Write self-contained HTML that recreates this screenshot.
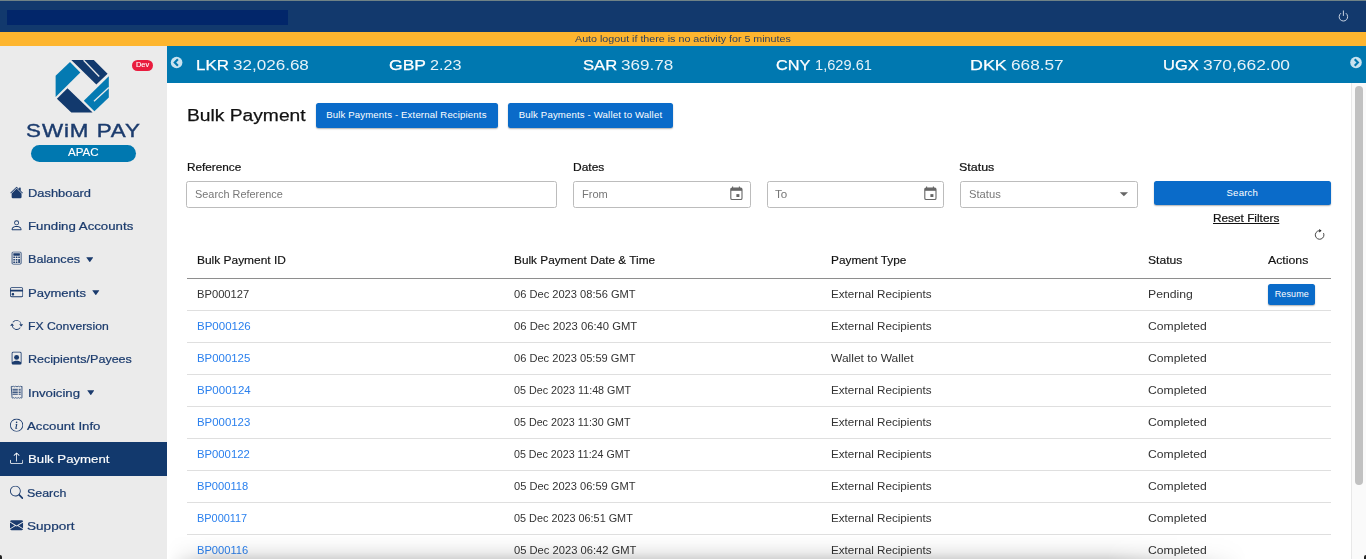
<!DOCTYPE html>
<html lang="en">
<head>
<meta charset="utf-8">
<title>Bulk Payment</title>
<style>
*{box-sizing:border-box;margin:0;padding:0}
html,body{width:1366px;height:559px;overflow:hidden;background:#fff}
body{font-family:"Liberation Sans",sans-serif;position:relative;color:#212529}
.a,.t{position:absolute}
.t{white-space:nowrap;line-height:16px;height:16px;transform-origin:0 50%}
#topbar{left:0;top:0;width:1366px;height:32px;background:#12396d;border-top:1px solid #6f8286}
#redact{left:7px;top:10px;width:281px;height:15px;background:#02266a}
#warn{left:0;top:32px;width:1366px;height:14px;background:#fdb52f}
#side{left:0;top:46px;width:167px;height:513px;background:#ebebeb}
#act{left:0;top:442px;width:167px;height:34px;background:#12396d}
#ticker{left:167px;top:46px;width:1199px;height:37px;background:#0078b0}
#sbar{left:1351px;top:83px;width:15px;height:476px;background:#fafafa;border-left:1px solid #e8e8e8}
#thumb{left:1355px;top:86px;width:8px;height:399px;border-radius:4px;background:#c1c1c1}
#dev{left:132px;top:60px;width:21.3px;height:11px;border-radius:5.5px;background:#e91c3e}
#apac{left:31px;top:145px;width:105px;height:17px;border-radius:8.5px;background:#0078b0}
.btn{background:#0a6bc9;border-radius:2.5px;box-shadow:0 1px 1.5px rgba(0,0,0,.3)}
.inp{top:181px;height:27px;border:1px solid #bcbcbc;border-radius:2.5px;background:#fff}
.hr{left:187px;width:1144px;height:1px;background:#dfdfdf}
.car{width:0;height:0;border-left:3.7px solid transparent;border-right:3.7px solid transparent;border-top:5px solid #1b3b6d}
</style>
</head>
<body>
<div class="a" id="topbar"></div><div class="a" id="redact"></div>
<div class="a" id="warn"></div>
<div class="a" id="side"></div><div class="a" id="act"></div>
<div class="a" id="ticker"></div>
<div class="a" id="sbar"></div><div class="a" id="thumb"></div>
<div class="a" id="dev"></div><div class="a" id="apac"></div>
<svg class="a" style="left:50px;top:56px" width="66" height="60" viewBox="50 56 66 60">
<polygon points="70,61.9 80.3,72.5 55.6,96.9 55.6,75.7" fill="#047ab2"/>
<polygon points="71.3,60 93.8,60 107.6,73.8 96.3,84.4" fill="#12396d"/>
<line x1="83.6" y1="60.3" x2="99.2" y2="76.5" stroke="#ebebeb" stroke-width="1.3"/>
<polygon points="108.8,76.3 108.8,97.6 94.4,111.3 83.8,100.7" fill="#047ab2"/>
<line x1="108.8" y1="87.5" x2="94" y2="101.2" stroke="#ebebeb" stroke-width="1.3"/>
<polygon points="67.5,88.2 92.6,112.6 71.3,112.6 56.9,98.8" fill="#12396d"/>
</svg>
<svg class="a" style="left:85.9px;top:257.3px" width="7.6" height="5.2" viewBox="0 0 7.6 5.2"><path d="M.7 .2h6.200q.600 0 .200 .500L4.200 4.700q-.400 .400-.800 0L.500 .700q-.400-.500 .200-.500z" fill="#1b3b6d"/></svg><svg class="a" style="left:92px;top:290px" width="7.6" height="5.2" viewBox="0 0 7.6 5.2"><path d="M.7 .2h6.200q.600 0 .200 .500L4.200 4.700q-.400 .400-.800 0L.500 .700q-.400-.500 .200-.500z" fill="#1b3b6d"/></svg><svg class="a" style="left:86.6px;top:390.3px" width="7.6" height="5.2" viewBox="0 0 7.6 5.2"><path d="M.7 .2h6.200q.600 0 .200 .500L4.200 4.700q-.400 .400-.800 0L.500 .700q-.400-.500 .200-.500z" fill="#1b3b6d"/></svg>
<div class="a btn" style="left:316px;top:103px;width:182px;height:25px"></div><div class="a btn" style="left:508px;top:103px;width:165px;height:25px"></div><div class="a btn" style="left:1154px;top:181px;width:177px;height:24px"></div><div class="a btn" style="left:1268px;top:284px;width:47px;height:21px"></div>
<div class="a inp" style="left:186px;width:371px"></div><div class="a inp" style="left:573px;width:178px"></div><div class="a inp" style="left:767px;width:177px"></div><div class="a inp" style="left:960px;width:178px"></div><svg class="a" style="left:0;top:180px" width="30" height="379" viewBox="0 180 30 379">
<svg x="10" y="185.9" width="13.2" height="13.2" viewBox="0 0 16 16" fill="#1b3b6d"><path d="M8.707 1.5a1 1 0 0 0-1.414 0L.646 8.146a.5.5 0 0 0 .708.708L8 2.207l6.646 6.647a.5.5 0 0 0 .708-.708L13 5.793V2.500a.5.5 0 0 0-.5-.5h-1a.5.5 0 0 0-.5.5v1.293L8.707 1.500Z"/><path d="m8 3.293 6 6V13.500a1.500 1.500 0 0 1-1.500 1.500h-9A1.500 1.500 0 0 1 2 13.500V9.293l6-6Z"/></svg>
<svg x="10" y="218.65" width="13.2" height="13.2" viewBox="0 0 16 16" fill="#1b3b6d"><path d="M8 8a3 3 0 1 0 0-6 3 3 0 0 0 0 6Zm2-3a2 2 0 1 1-4 0 2 2 0 0 1 4 0Zm4 8c0 1-1 1-1 1H3s-1 0-1-1 1-4 6-4 6 3 6 4Zm-1-.004c-.001-.246-.154-.986-.832-1.664C11.516 10.680 10.289 10 8 10c-2.290 0-3.516.680-4.168 1.332-.678.678-.830 1.418-.832 1.664h10Z"/></svg>
<svg x="10" y="251.5" width="13.2" height="13.2" viewBox="0 0 16 16" fill="#1b3b6d"><rect x="2.500" y=".500" width="11" height="15" rx="1.500" fill="none" stroke="#1b3b6d" stroke-width="1"/><rect x="4" y="2" width="8" height="3" rx=".5"/><rect x="4" y="6" width="2" height="2" rx=".5"/><rect x="4" y="9" width="2" height="2" rx=".5"/><rect x="4" y="12" width="2" height="2" rx=".5"/><rect x="7" y="6" width="2" height="2" rx=".5"/><rect x="7" y="9" width="2" height="2" rx=".5"/><rect x="7" y="12" width="2" height="2" rx=".5"/><rect x="10" y="6" width="2" height="2" rx=".5"/><rect x="10" y="9" width="2" height="5" rx=".5"/></svg>
<svg x="10" y="285.65" width="13.2" height="13.2" viewBox="0 0 16 16" fill="#1b3b6d"><path d="M0 4a2 2 0 0 1 2-2h12a2 2 0 0 1 2 2v8a2 2 0 0 1-2 2H2a2 2 0 0 1-2-2V4zm2-1a1 1 0 0 0-1 1v1h14V4a1 1 0 0 0-1-1H2zm13 4H1v5a1 1 0 0 0 1 1h12a1 1 0 0 0 1-1V7z"/><path d="M2 10a1 1 0 0 1 1-1h1a1 1 0 0 1 1 1v1a1 1 0 0 1-1 1H3a1 1 0 0 1-1-1v-1z"/></svg>
<svg x="10" y="318.35" width="13.2" height="13.2" viewBox="0 0 16 16" fill="#1b3b6d"><path d="M11.534 7h3.932a.25.25 0 0 1 .192.410l-1.966 2.360a.25.25 0 0 1-.384 0l-1.966-2.360a.25.25 0 0 1 .192-.410zm-11 2h3.932a.25.25 0 0 0 .192-.410L2.692 6.230a.25.25 0 0 0-.384 0L.342 8.590A.25.25 0 0 0 .534 9z"/><path fill-rule="evenodd" d="M8 3c-1.552 0-2.940.707-3.857 1.818a.5.5 0 1 1-.771-.636A6.002 6.002 0 0 1 13.917 7H12.900A5.002 5.002 0 0 0 8 3zM3.100 9a5.002 5.002 0 0 0 8.757 2.182.5.5 0 1 1 .771.636A6.002 6.002 0 0 1 2.083 9H3.100z"/></svg>
<svg x="10" y="351.6" width="13.2" height="13.2" viewBox="0 0 16 16" fill="#1b3b6d"><path d="M12 1a1 1 0 0 1 1 1v10.755S12 11 8 11s-5 1.755-5 1.755V2a1 1 0 0 1 1-1h8zM4 0a2 2 0 0 0-2 2v12a2 2 0 0 0 2 2h8a2 2 0 0 0 2-2V2a2 2 0 0 0-2-2H4z"/><path d="M8 10a3 3 0 1 0 0-6 3 3 0 0 0 0 6z"/></svg>
<svg x="10" y="385.6" width="13.2" height="13.2" viewBox="0 0 16 16" fill="#1b3b6d"><path d="M1.500 1.200 2.500.600l1 .800 1-.800 1 .800 1-.800 1 .800 1-.800 1 .800 1-.800 1 .800 1-.800 1 .800 1-.600V14.800l-1 .600-1-.800-1 .800-1-.800-1 .800-1-.800-1 .800-1-.800-1 .800-1-.800-1 .800-1-.600z" fill="none" stroke="#1b3b6d" stroke-width="1"/><path d="M3.500 4.500h5.500M3.500 6.500h5.500M3.500 8.500h5.500M3.500 10.500h5.500M11 4.500h1.500M11 6.500h1.500M11 8.500h1.500M11 10.500h1.500" stroke="#1b3b6d" stroke-width="1.100" stroke-linecap="round" fill="none"/></svg>
<svg x="10" y="418.6" width="13.2" height="13.2" viewBox="0 0 16 16" fill="#1b3b6d"><path d="M8 15A7 7 0 1 1 8 1a7 7 0 0 1 0 14zm0 1A8 8 0 1 0 8 0a8 8 0 0 0 0 16z"/><path d="m8.930 6.588-2.290.287-.082.380.450.083c.294.070.352.176.288.469l-.738 3.468c-.194.897.105 1.319.808 1.319.545 0 1.178-.252 1.465-.598l.088-.416c-.200.176-.492.246-.686.246-.275 0-.375-.193-.304-.533L8.930 6.588zM9 4.500a1 1 0 1 1-2 0 1 1 0 0 1 2 0z"/></svg>
<svg x="10" y="451.7" width="13.2" height="13.2" viewBox="0 0 16 16" fill="#fff"><path d="M.5 9.900a.5.5 0 0 1 .5.500v2.500a1 1 0 0 0 1 1h12a1 1 0 0 0 1-1v-2.500a.5.5 0 0 1 1 0v2.500a2 2 0 0 1-2 2H2a2 2 0 0 1-2-2v-2.500a.5.5 0 0 1 .5-.500z"/><path d="M7.646 1.146a.5.5 0 0 1 .708 0l3 3a.5.5 0 0 1-.708.708L8.500 2.707V11.500a.5.5 0 0 1-1 0V2.707L5.354 4.854a.5.5 0 1 1-.708-.708l3-3z"/></svg>
<svg x="10" y="485.7" width="13.2" height="13.2" viewBox="0 0 16 16" fill="#1b3b6d"><path d="M11.742 10.344a6.500 6.500 0 1 0-1.397 1.398h-.001c.030.040.062.078.098.115l3.850 3.850a1 1 0 0 0 1.415-1.414l-3.850-3.850a1.007 1.007 0 0 0-.115-.100zM12 6.500a5.500 5.500 0 1 1-11 0 5.500 5.500 0 0 1 11 0z"/></svg>
<svg x="10" y="518.65" width="13.2" height="13.2" viewBox="0 0 16 16" fill="#1b3b6d"><path d="M.05 3.555A2 2 0 0 1 2 2h12a2 2 0 0 1 1.950 1.555L8 8.414.050 3.555ZM0 4.697v7.104l5.803-3.558L0 4.697ZM6.761 8.830l-6.570 4.027A2 2 0 0 0 2 14h12a2 2 0 0 0 1.808-1.144l-6.570-4.027L8 9.586l-1.239-.757Zm3.436-.586L16 11.801V4.697l-5.803 3.546Z"/></svg>
</svg>
<svg class="a" style="left:170px;top:56px" width="14" height="14" viewBox="170 56 14 14"><circle cx="176.600" cy="62.500" r="5.800" fill="#c9e2ef"/><path d="M177.900 59.300 174.700 62.500l3.200 3.200" fill="none" stroke="#0078b0" stroke-width="2.100"/></svg>
<svg class="a" style="left:1349px;top:56px" width="14" height="14" viewBox="1349 56 14 14"><circle cx="1356" cy="62.500" r="5.800" fill="#c9e2ef"/><path d="M1354.700 59.300l3.200 3.200-3.200 3.200" fill="none" stroke="#0078b0" stroke-width="2.100"/></svg>
<svg class="a" style="left:1336px;top:9px" width="15" height="15" viewBox="1336 9 15 15" fill="none" stroke="#d3dbe8" stroke-width=".95" stroke-linecap="round"><path d="M1346.160 13.410A4.300 4.300 0 1 1 1340.640 13.410"/><path d="M1343.400 10.900v4.600"/></svg>
<svg class="a" style="left:729.6px;top:186px" width="13" height="15" viewBox="0 0 13 15"><path d="M2.600 .5v2M9.400 .5v2" stroke="#666" stroke-width="1.100"/><rect x=".800" y="2.100" width="11.200" height="11.400" rx="1.300" fill="none" stroke="#666" stroke-width="1.100"/><rect x=".800" y="2.100" width="11.200" height="2.700" fill="#666"/><rect x="6.400" y="8.100" width="3" height="2.900" fill="#666"/></svg>
<svg class="a" style="left:923.6px;top:186px" width="13" height="15" viewBox="0 0 13 15"><path d="M2.600 .5v2M9.400 .5v2" stroke="#666" stroke-width="1.100"/><rect x=".800" y="2.100" width="11.200" height="11.400" rx="1.300" fill="none" stroke="#666" stroke-width="1.100"/><rect x=".800" y="2.100" width="11.200" height="2.700" fill="#666"/><rect x="6.400" y="8.100" width="3" height="2.900" fill="#666"/></svg>
<svg class="a" style="left:1119px;top:192px" width="10" height="5" viewBox="0 0 10 5"><path d="M.800 .300h8.200L4.900 4.300z" fill="#666"/></svg>
<svg class="a" style="left:1313px;top:228px" width="14" height="14" viewBox="1313 228 14 14"><path d="M1323.500 233.100A4.300 4.300 0 1 1 1319 230.700" fill="none" stroke="#333" stroke-width=".9"/><path d="M1319.200 229 1321.600 230.700 1319.200 232.400z" fill="#222"/></svg>

<div class="a hr" style="top:278px;background:#8e8e8e"></div><div class="a hr" style="top:310px"></div><div class="a hr" style="top:342px"></div><div class="a hr" style="top:374px"></div><div class="a hr" style="top:406px"></div><div class="a hr" style="top:438px"></div><div class="a hr" style="top:470px"></div><div class="a hr" style="top:502px"></div><div class="a hr" style="top:534px"></div>
<div class="t" style="left:574.94px;top:30.8px;font-size:9.5px;color:#2c3f5c;transform:scaleX(1.1257);">Auto logout if there is no activity for 5 minutes</div>
<div class="t" style="left:26.3px;top:123.1px;font-size:18.6px;color:#1b3b6d;-webkit-text-stroke:0.4px #1b3b6d;transform:scaleX(1.2026);letter-spacing:.8px;">SWiM PAY</div>
<div class="t" style="left:68.17px;top:144.4px;font-size:10.5px;color:#fff;-webkit-text-stroke:0.1px #fff;transform:scaleX(1.1022);">APAC</div>
<div class="t" style="left:136.03px;top:56.7px;font-size:6.7px;color:#fff;-webkit-text-stroke:0.1px #fff;transform:scaleX(1.1102);">Dev</div>
<div class="t" style="left:27.69px;top:184.8px;font-size:11.6px;color:#1b3b6d;-webkit-text-stroke:0.22px #1b3b6d;transform:scaleX(1.1111);">Dashboard</div>
<div class="t" style="left:27.69px;top:217.9px;font-size:11.6px;color:#1b3b6d;-webkit-text-stroke:0.22px #1b3b6d;transform:scaleX(1.142);">Funding Accounts</div>
<div class="t" style="left:27.69px;top:251.1px;font-size:11.6px;color:#1b3b6d;-webkit-text-stroke:0.22px #1b3b6d;transform:scaleX(1.0899);">Balances</div>
<div class="t" style="left:27.69px;top:284.6px;font-size:11.6px;color:#1b3b6d;-webkit-text-stroke:0.22px #1b3b6d;transform:scaleX(1.1256);">Payments</div>
<div class="t" style="left:27.69px;top:318px;font-size:11.6px;color:#1b3b6d;-webkit-text-stroke:0.22px #1b3b6d;transform:scaleX(1.0529);">FX Conversion</div>
<div class="t" style="left:27.69px;top:351.2px;font-size:11.6px;color:#1b3b6d;-webkit-text-stroke:0.22px #1b3b6d;transform:scaleX(1.0817);">Recipients/Payees</div>
<div class="t" style="left:27.69px;top:385px;font-size:11.6px;color:#1b3b6d;-webkit-text-stroke:0.22px #1b3b6d;transform:scaleX(1.1373);">Invoicing</div>
<div class="t" style="left:27.39px;top:418px;font-size:11.6px;color:#1b3b6d;-webkit-text-stroke:0.22px #1b3b6d;transform:scaleX(1.1397);">Account Info</div>
<div class="t" style="left:27.69px;top:451.2px;font-size:11.6px;color:#fff;-webkit-text-stroke:0.15px #fff;transform:scaleX(1.1387);">Bulk Payment</div>
<div class="t" style="left:27.39px;top:484.8px;font-size:11.6px;color:#1b3b6d;-webkit-text-stroke:0.22px #1b3b6d;transform:scaleX(1.0717);">Search</div>
<div class="t" style="left:27.39px;top:518px;font-size:11.6px;color:#1b3b6d;-webkit-text-stroke:0.22px #1b3b6d;transform:scaleX(1.1695);">Support</div>
<div class="t" style="left:196.31px;top:56.6px;font-size:15.5px;color:#fff;-webkit-text-stroke:0.25px #fff;transform:scaleX(1.0896);">LKR</div>
<div class="t" style="left:233.11px;top:56.6px;font-size:15.5px;color:#e6f2f8;transform:scaleX(1.1001);">32,026.68</div>
<div class="t" style="left:389.12px;top:56.6px;font-size:15.5px;color:#fff;-webkit-text-stroke:0.25px #fff;transform:scaleX(1.1312);">GBP</div>
<div class="t" style="left:430.12px;top:56.6px;font-size:15.5px;color:#e6f2f8;transform:scaleX(1.0433);">2.23</div>
<div class="t" style="left:582.51px;top:56.6px;font-size:15.5px;color:#fff;-webkit-text-stroke:0.25px #fff;transform:scaleX(1.0739);">SAR</div>
<div class="t" style="left:620.62px;top:56.6px;font-size:15.5px;color:#e6f2f8;transform:scaleX(1.1003);">369.78</div>
<div class="t" style="left:775.91px;top:56.6px;font-size:15.5px;color:#fff;-webkit-text-stroke:0.25px #fff;transform:scaleX(1.0506);">CNY</div>
<div class="t" style="left:815.21px;top:56.6px;font-size:15.5px;color:#e6f2f8;transform:scaleX(0.9431);">1,629.61</div>
<div class="t" style="left:970.12px;top:56.6px;font-size:15.5px;color:#fff;-webkit-text-stroke:0.25px #fff;transform:scaleX(1.1535);">DKK</div>
<div class="t" style="left:1010.62px;top:56.6px;font-size:15.5px;color:#e6f2f8;transform:scaleX(1.1112);">668.57</div>
<div class="t" style="left:1163.41px;top:56.6px;font-size:15.5px;color:#fff;-webkit-text-stroke:0.25px #fff;transform:scaleX(1.0631);">UGX</div>
<div class="t" style="left:1202.82px;top:56.6px;font-size:15.5px;color:#e6f2f8;transform:scaleX(1.1216);">370,662.00</div>
<div class="t" style="left:186.99px;top:107px;font-size:17.3px;color:#111;-webkit-text-stroke:0.25px #111;transform:scaleX(1.1125);">Bulk Payment</div>
<div class="t" style="left:326.13px;top:107px;font-size:9.6px;color:#fff;letter-spacing:0.152px;">Bulk Payments - External Recipients</div>
<div class="t" style="left:518.73px;top:107px;font-size:9.6px;color:#fff;letter-spacing:0.158px;">Bulk Payments - Wallet to Wallet</div>
<div class="t" style="left:1226.53px;top:184.7px;font-size:9.6px;color:#fff;letter-spacing:0.19px;">Search</div>
<div class="t" style="left:1274.77px;top:286.3px;font-size:9.0px;color:#fff;letter-spacing:0.095px;">Resume</div>
<div class="t" style="left:186.76px;top:159.4px;font-size:10.6px;color:#111;-webkit-text-stroke:0.2px #111;transform:scaleX(1.1105);">Reference</div>
<div class="t" style="left:573.16px;top:159.4px;font-size:10.6px;color:#111;-webkit-text-stroke:0.2px #111;transform:scaleX(1.1312);">Dates</div>
<div class="t" style="left:959.36px;top:159.4px;font-size:10.6px;color:#111;-webkit-text-stroke:0.2px #111;transform:scaleX(1.1772);">Status</div>
<div class="t" style="left:194.64px;top:186.4px;font-size:10.9px;color:#777;transform:scaleX(1.0002);">Search Reference</div>
<div class="t" style="left:582.34px;top:186.4px;font-size:10.9px;color:#777;transform:scaleX(1.0156);">From</div>
<div class="t" style="left:775.24px;top:186.4px;font-size:10.9px;color:#777;transform:scaleX(1.0662);">To</div>
<div class="t" style="left:968.84px;top:186.4px;font-size:10.9px;color:#777;transform:scaleX(1.0311);">Status</div>
<div class="t" style="left:1212.66px;top:210.2px;font-size:10.6px;color:#111;-webkit-text-stroke:0.2px #111;transform:scaleX(1.1149);text-decoration:underline;text-underline-offset:1px;text-decoration-thickness:.9px;">Reset Filters</div>
<div class="t" style="left:197.15px;top:252.4px;font-size:10.7px;color:#111;-webkit-text-stroke:0.15px #111;transform:scaleX(1.1171);">Bulk Payment ID</div>
<div class="t" style="left:514.05px;top:252.4px;font-size:10.7px;color:#111;-webkit-text-stroke:0.15px #111;transform:scaleX(1.1048);">Bulk Payment Date &amp; Time</div>
<div class="t" style="left:831.15px;top:252.4px;font-size:10.7px;color:#111;-webkit-text-stroke:0.15px #111;transform:scaleX(1.1068);">Payment Type</div>
<div class="t" style="left:1147.55px;top:252.4px;font-size:10.7px;color:#111;-webkit-text-stroke:0.15px #111;transform:scaleX(1.1326);">Status</div>
<div class="t" style="left:1267.55px;top:252.4px;font-size:10.7px;color:#111;-webkit-text-stroke:0.15px #111;transform:scaleX(1.1509);">Actions</div>
<div class="t" style="left:197.15px;top:286.3px;font-size:10.7px;color:#333;transform:scaleX(1.0463);">BP000127</div>
<div class="t" style="left:514.05px;top:286.3px;font-size:10.7px;color:#333;transform:scaleX(1.0391);">06 Dec 2023 08:56 GMT</div>
<div class="t" style="left:831.15px;top:286.3px;font-size:10.7px;color:#333;transform:scaleX(1.0913);">External Recipients</div>
<div class="t" style="left:1148.05px;top:286.3px;font-size:10.7px;color:#333;transform:scaleX(1.143);">Pending</div>
<div class="t" style="left:197.15px;top:318.3px;font-size:10.7px;color:#2b80ee;transform:scaleX(1.077);">BP000126</div>
<div class="t" style="left:514.05px;top:318.3px;font-size:10.7px;color:#333;transform:scaleX(1.0529);">06 Dec 2023 06:40 GMT</div>
<div class="t" style="left:831.15px;top:318.3px;font-size:10.7px;color:#333;transform:scaleX(1.0913);">External Recipients</div>
<div class="t" style="left:1148.05px;top:318.3px;font-size:10.7px;color:#333;transform:scaleX(1.1364);">Completed</div>
<div class="t" style="left:197.15px;top:350.3px;font-size:10.7px;color:#2b80ee;transform:scaleX(1.0668);">BP000125</div>
<div class="t" style="left:514.05px;top:350.3px;font-size:10.7px;color:#333;transform:scaleX(1.0382);">06 Dec 2023 05:59 GMT</div>
<div class="t" style="left:831.15px;top:350.3px;font-size:10.7px;color:#333;transform:scaleX(1.1249);">Wallet to Wallet</div>
<div class="t" style="left:1148.05px;top:350.3px;font-size:10.7px;color:#333;transform:scaleX(1.1364);">Completed</div>
<div class="t" style="left:197.15px;top:382.3px;font-size:10.7px;color:#2b80ee;transform:scaleX(1.077);">BP000124</div>
<div class="t" style="left:514.05px;top:382.3px;font-size:10.7px;color:#333;transform:scaleX(1.0063);">05 Dec 2023 11:48 GMT</div>
<div class="t" style="left:831.15px;top:382.3px;font-size:10.7px;color:#333;transform:scaleX(1.0913);">External Recipients</div>
<div class="t" style="left:1148.05px;top:382.3px;font-size:10.7px;color:#333;transform:scaleX(1.1364);">Completed</div>
<div class="t" style="left:197.15px;top:414.3px;font-size:10.7px;color:#2b80ee;transform:scaleX(1.0668);">BP000123</div>
<div class="t" style="left:514.05px;top:414.3px;font-size:10.7px;color:#333;transform:scaleX(1.0028);">05 Dec 2023 11:30 GMT</div>
<div class="t" style="left:831.15px;top:414.3px;font-size:10.7px;color:#333;transform:scaleX(1.0913);">External Recipients</div>
<div class="t" style="left:1148.05px;top:414.3px;font-size:10.7px;color:#333;transform:scaleX(1.1364);">Completed</div>
<div class="t" style="left:197.15px;top:446.3px;font-size:10.7px;color:#2b80ee;transform:scaleX(1.0565);">BP000122</div>
<div class="t" style="left:514.05px;top:446.3px;font-size:10.7px;color:#333;transform:scaleX(0.9994);">05 Dec 2023 11:24 GMT</div>
<div class="t" style="left:831.15px;top:446.3px;font-size:10.7px;color:#333;transform:scaleX(1.0913);">External Recipients</div>
<div class="t" style="left:1148.05px;top:446.3px;font-size:10.7px;color:#333;transform:scaleX(1.1364);">Completed</div>
<div class="t" style="left:197.15px;top:478.3px;font-size:10.7px;color:#2b80ee;transform:scaleX(1.0425);">BP000118</div>
<div class="t" style="left:514.05px;top:478.3px;font-size:10.7px;color:#333;transform:scaleX(1.0382);">05 Dec 2023 06:59 GMT</div>
<div class="t" style="left:831.15px;top:478.3px;font-size:10.7px;color:#333;transform:scaleX(1.0913);">External Recipients</div>
<div class="t" style="left:1148.05px;top:478.3px;font-size:10.7px;color:#333;transform:scaleX(1.1364);">Completed</div>
<div class="t" style="left:197.15px;top:510.3px;font-size:10.7px;color:#2b80ee;transform:scaleX(1.0216);">BP000117</div>
<div class="t" style="left:514.05px;top:510.3px;font-size:10.7px;color:#333;transform:scaleX(1.0149);">05 Dec 2023 06:51 GMT</div>
<div class="t" style="left:831.15px;top:510.3px;font-size:10.7px;color:#333;transform:scaleX(1.0913);">External Recipients</div>
<div class="t" style="left:1148.05px;top:510.3px;font-size:10.7px;color:#333;transform:scaleX(1.1364);">Completed</div>
<div class="t" style="left:197.15px;top:542.3px;font-size:10.7px;color:#2b80ee;transform:scaleX(1.0425);">BP000116</div>
<div class="t" style="left:514.05px;top:542.3px;font-size:10.7px;color:#333;transform:scaleX(1.046);">05 Dec 2023 06:42 GMT</div>
<div class="t" style="left:831.15px;top:542.3px;font-size:10.7px;color:#333;transform:scaleX(1.0913);">External Recipients</div>
<div class="t" style="left:1148.05px;top:542.3px;font-size:10.7px;color:#333;transform:scaleX(1.1364);">Completed</div>
<div class="a" style="left:167px;top:535px;width:1080px;height:24px;background:linear-gradient(rgba(0,0,0,0),rgba(0,0,0,.025) 35%,rgba(0,0,0,.07) 70%,rgba(0,0,0,.17));-webkit-mask-image:linear-gradient(to right,transparent,#000 45px,#000 940px,transparent)"></div>
<div class="a" style="left:0;top:555px;width:2px;height:4px;background:#222;border-top-right-radius:2px"></div><div class="a" style="left:1364px;top:555px;width:2px;height:4px;background:#222;border-top-left-radius:2px"></div>
</body>
</html>
